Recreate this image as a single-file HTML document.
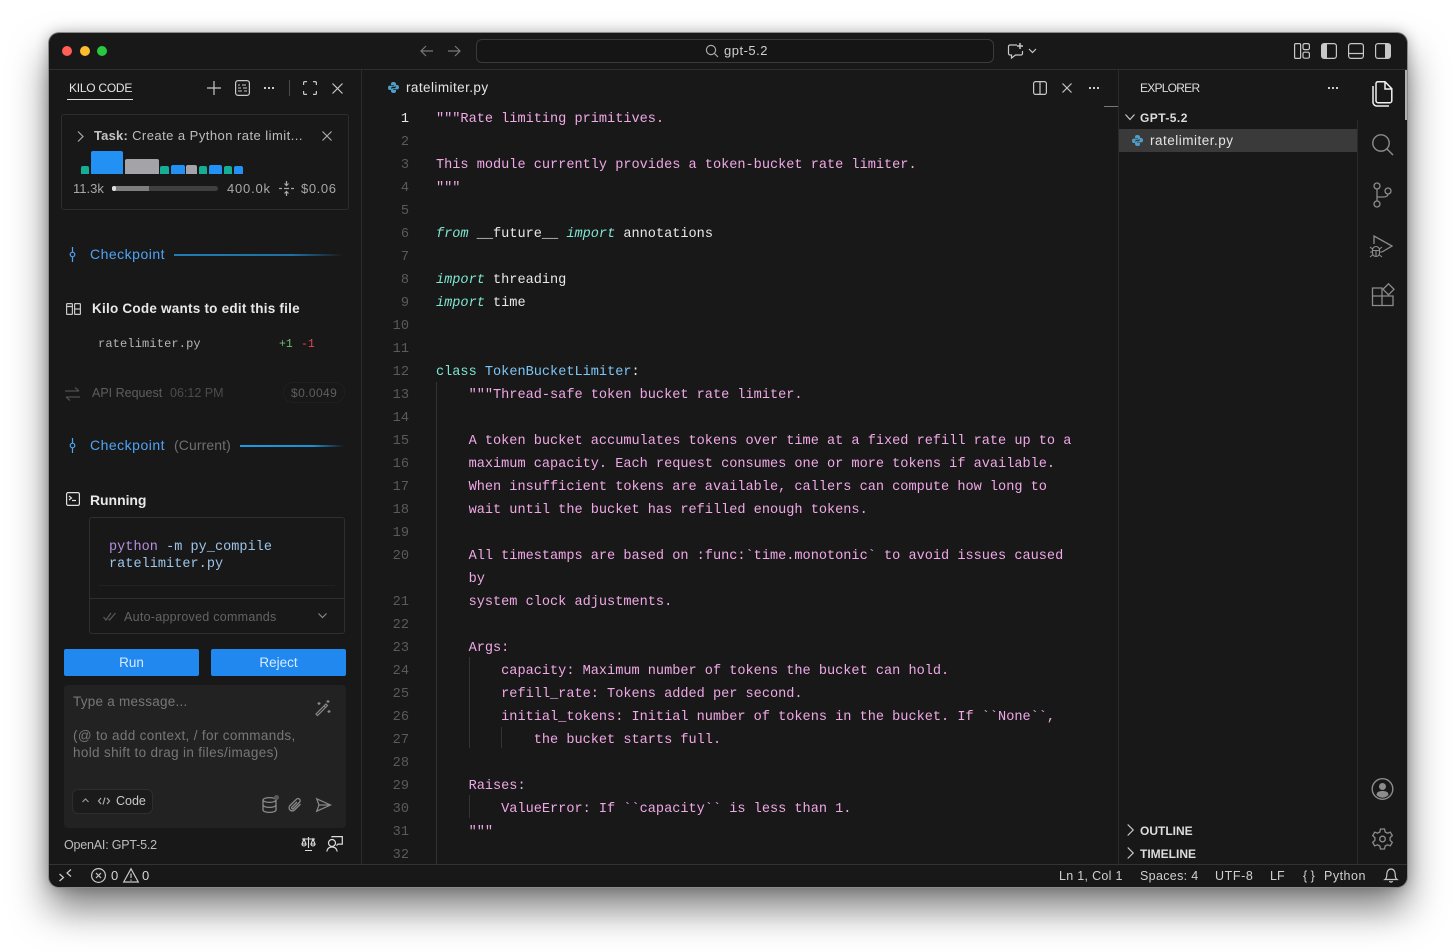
<!DOCTYPE html>
<html><head><meta charset="utf-8"><style>
*{box-sizing:border-box}
html,body{margin:0;padding:0;width:1456px;height:952px;background:#fff;overflow:hidden}
body{font-family:"Liberation Sans",sans-serif;position:relative}
#win{position:absolute;left:49px;top:33px;width:1358px;height:854px;background:#181818;border-radius:10px;box-shadow:0 0 0 1px #8a8a8a,0 22px 38px rgba(0,0,0,.5),0 0 14px rgba(0,0,0,.28);}
.a{position:absolute;white-space:pre}
.ln{position:absolute;left:1px;width:408px;margin-top:2px;text-align:right;font:13.6px/23px "Liberation Mono",monospace;color:#5a5a5a}
.c{position:absolute;left:436px;margin-top:2px;font:13.6px/23px "Liberation Mono",monospace;letter-spacing:-.012px;color:#f0a8e6;white-space:pre}
.k{color:#7fe6cf;font-style:italic}.w{color:#e8e8e8}.b{color:#7fc4f5}.d{color:#e8e8e8}
.s{font-size:13px;color:#cfcfcf;line-height:16px}
svg{position:absolute;overflow:visible;fill:none;stroke:#c8c8c8;stroke-width:1.2}
.r{position:absolute;background:#3a3a3a}
.bar{position:absolute;border-radius:2px 2px 0 0}
</style></head><body>
<div id="win"></div>

<!-- structural lines -->
<div class="r" style="left:49px;top:69px;width:1358px;height:1px;background:#2e2e2e"></div>
<div class="r" style="left:49px;top:864px;width:1358px;height:1px;background:#333"></div>
<div class="r" style="left:361px;top:70px;width:1px;height:794px;background:#2b2b2b"></div>
<div class="r" style="left:1118px;top:70px;width:1px;height:794px;background:#2b2b2b"></div>
<div class="r" style="left:1357px;top:120px;width:1px;height:744px;background:#2b2b2b"></div>
<div class="r" style="left:1405px;top:70px;width:2px;height:50px;background:#b0b0b0"></div>
<div class="r" style="left:1104px;top:106px;width:14px;height:1px;background:#777"></div>

<!-- traffic lights -->
<div class="a" style="left:62px;top:46px;width:10px;height:10px;border-radius:50%;background:#ff5f57"></div>
<div class="a" style="left:80px;top:46px;width:10px;height:10px;border-radius:50%;background:#febc2e"></div>
<div class="a" style="left:97px;top:46px;width:10px;height:10px;border-radius:50%;background:#28c840"></div>

<!-- title bar -->
<svg style="left:420px;top:44px" width="14" height="14" stroke="#777"><path d="M13 7H1M6 2L1 7l5 5" style="stroke:#777"/></svg>
<svg style="left:447px;top:44px" width="14" height="14"><path d="M1 7h12M8 2l5 5-5 5" style="stroke:#777"/></svg>
<div class="a" style="left:476px;top:39px;width:518px;height:24px;border:1px solid #3a3a3a;border-radius:6px;background:#151515"></div>
<svg style="left:705px;top:44px" width="14" height="14"><circle cx="6" cy="6" r="4.6" style="stroke:#aaa"/><path d="M9.5 9.5L13 13" style="stroke:#aaa"/></svg>
<div class="a s" style="left:724px;top:43px;letter-spacing:.5px">gpt-5.2</div>
<svg style="left:1007px;top:42px" width="34" height="18"><path d="M10 3H3a1.5 1.5 0 0 0-1.500 1.500v7A1.500 1.500 0 0 0 3 13h1.500v3l4-3H14a1.500 1.500 0 0 0 1.500-1.500V9"/><path d="M13 1v6M10 4h6" style="stroke-width:1.500"/><path d="M22 7l3.500 3.500L29 7"/></svg>
<svg style="left:1294px;top:43px" width="16" height="16"><rect x=".6" y=".6" width="6" height="14.800" rx="1.200"/><rect x="9" y=".6" width="6.400" height="6" rx="1.500"/><rect x="9" y="9.200" width="6.400" height="6" rx="1.500"/></svg>
<svg style="left:1321px;top:43px" width="16" height="16"><rect x=".6" y=".6" width="14.800" height="14.800" rx="2.500"/><path d="M1 3a2 2 0 0 1 2-2h3v14H3a2 2 0 0 1-2-2z" style="fill:#c8c8c8;stroke:none"/></svg>
<svg style="left:1348px;top:43px" width="16" height="16"><rect x=".6" y=".6" width="14.800" height="14.800" rx="2.500"/><path d="M1 10.500h14"/></svg>
<svg style="left:1375px;top:43px" width="16" height="16"><rect x=".6" y=".6" width="14.800" height="14.800" rx="2.500"/><path d="M10 1h3a2 2 0 0 1 2 2v10a2 2 0 0 1-2 2h-3z" style="fill:#c8c8c8;stroke:none"/></svg>

<!-- Kilo header -->
<div class="a" style="left:69px;top:81px;font-size:12px;line-height:15px;color:#e4e4e4;letter-spacing:-.25px">KILO CODE</div>
<div class="r" style="left:67px;top:99px;width:66px;height:1px;background:#ddd"></div>
<svg style="left:207px;top:81px" width="14" height="14"><path d="M7 0v14M0 7h14"/></svg>
<svg style="left:235px;top:80px" width="15" height="16"><rect x=".6" y=".6" width="13.800" height="14.800" rx="2.500"/><path d="M3 5h2M7 5h4M3 8h3M8 8h4M3 11h4M9 11h3" style="stroke-width:1"/></svg>
<div class="a" style="left:264px;top:87px;width:2px;height:2px;background:#ccc;box-shadow:4px 0 #ccc,8px 0 #ccc"></div>
<div class="r" style="left:289px;top:80px;width:1px;height:16px;background:#4a4a4a"></div>
<svg style="left:303px;top:81px" width="14" height="14"><path d="M.6 4V1.800A1.200 1.200 0 0 1 1.800.6H4M10 .6h2.200a1.200 1.200 0 0 1 1.200 1.200V4M13.400 10v2.200a1.200 1.200 0 0 1-1.200 1.200H10M4 13.400H1.800a1.200 1.200 0 0 1-1.200-1.200V10"/></svg>
<svg style="left:332px;top:83px" width="11" height="11"><path d="M.5.500l10 10M10.500.500l-10 10"/></svg>

<!-- Task card -->
<div class="a" style="left:61px;top:114px;width:288px;height:96px;border:1px solid #2d2d2d;border-radius:3px"></div>
<svg style="left:77px;top:131px" width="7" height="11"><path d="M1 .5l5 5-5 5" style="stroke:#aaa"/></svg>
<div class="a s" style="left:94px;top:128px;color:#bdbdbd;font-size:13px;letter-spacing:.46px"><b style="color:#c4c4c4;letter-spacing:.2px">Task:</b> Create a Python rate limit...</div>
<svg style="left:322px;top:131px" width="10" height="10"><path d="M.5.500l9 9M9.500.500l-9 9" style="stroke:#aaa"/></svg>
<div class="bar" style="left:81px;top:166px;width:8px;height:8px;background:#13ae93"></div>
<div class="bar" style="left:91px;top:151px;width:32px;height:23px;background:#2390f3"></div>
<div class="bar" style="left:125px;top:159px;width:34px;height:15px;background:#a3a3a8"></div>
<div class="bar" style="left:160px;top:166px;width:9px;height:8px;background:#13ae93"></div>
<div class="bar" style="left:171px;top:165px;width:14px;height:9px;background:#2390f3"></div>
<div class="bar" style="left:186px;top:165px;width:11px;height:9px;background:#a3a3a8"></div>
<div class="bar" style="left:199px;top:166px;width:8px;height:8px;background:#13ae93"></div>
<div class="bar" style="left:209px;top:165px;width:13px;height:9px;background:#2390f3"></div>
<div class="bar" style="left:224px;top:166px;width:8px;height:8px;background:#13ae93"></div>
<div class="bar" style="left:234px;top:166px;width:9px;height:8px;background:#2390f3"></div>
<div class="a s" style="left:73px;top:181px;color:#a8a8a8">11.3k</div>
<div class="a" style="left:112px;top:186px;width:106px;height:5px;background:#3f3f3f;border-radius:3px"></div>
<div class="a" style="left:112px;top:186px;width:37px;height:5px;background:#7e7e7e;border-radius:3px 0 0 3px"></div>
<div class="a" style="left:112px;top:186px;width:4px;height:5px;background:#ddd;border-radius:3px"></div>
<div class="a s" style="left:227px;top:181px;color:#a8a8a8;letter-spacing:.8px">400.0k</div>
<svg style="left:279px;top:181px" width="15" height="15"><path d="M7.500 0v4M5.500 2.500l2 2 2-2M7.500 15v-4M5.500 12.500l2-2 2 2M0 7.500h3M5 7.500h5M12 7.500h3" style="stroke:#aaa"/></svg>
<div class="a s" style="left:301px;top:181px;color:#a8a8a8;letter-spacing:.6px">$0.06</div>

<!-- Checkpoint 1 -->
<svg style="left:69px;top:247px" width="7" height="15"><circle cx="3.500" cy="7.500" r="2.300" style="stroke:#4ea4f5"/><path d="M3.500 0v5M3.500 10v5" style="stroke:#4ea4f5"/></svg>
<div class="a" style="left:90px;top:246px;font-size:14px;line-height:17px;color:#4ea4f5;letter-spacing:.5px">Checkpoint</div>
<div class="a" style="left:174px;top:254px;width:170px;height:2px;background:linear-gradient(90deg,#1f7db8,#1f6f9f 70%,rgba(24,24,24,0))"></div>

<!-- Edit -->
<svg style="left:66px;top:303px" width="15" height="12"><rect x=".6" y=".6" width="5.800" height="10.800" rx=".8"/><rect x="8.600" y=".6" width="5.800" height="10.800" rx=".8"/><path d="M1 3.500h5M9 6h5"/></svg>
<div class="a" style="left:92px;top:300px;font-size:13.500px;line-height:17px;font-weight:bold;color:#e8e8e8;letter-spacing:.23px">Kilo Code wants to edit this file</div>
<div class="a" style="left:98px;top:337px;font:12px/15px 'Liberation Mono',monospace;color:#b5b5b5;letter-spacing:.14px">ratelimiter.py</div>
<div class="a" style="left:279px;top:337px;font:11.500px/15px 'Liberation Mono',monospace;color:#6dbb6d">+1</div>
<div class="a" style="left:301px;top:337px;font:11.500px/15px 'Liberation Mono',monospace;color:#e2474f">-1</div>

<!-- API request -->
<svg style="left:65px;top:387px" width="15" height="14"><path d="M0 4h14M10 .5l4 3.500M15 10H1M5 13.500L1 10" style="stroke:#4e4e4e;stroke-width:1.300"/></svg>
<div class="a" style="left:92px;top:385px;font-size:12.500px;line-height:16px;color:#5e5e5e">API Request</div>
<div class="a" style="left:170px;top:385px;font-size:12.500px;line-height:16px;color:#4c4c4c">06:12 PM</div>
<div class="a" style="left:283px;top:382px;width:62px;height:21px;border:1px solid #1f1f1f;border-radius:10px"></div>
<div class="a" style="left:291px;top:385px;font-size:12px;line-height:16px;color:#5e5e5e;letter-spacing:.4px">$0.0049</div>

<!-- Checkpoint 2 -->
<svg style="left:69px;top:438px" width="7" height="15"><circle cx="3.500" cy="7.500" r="2.300" style="stroke:#4ea4f5"/><path d="M3.500 0v5M3.500 10v5" style="stroke:#4ea4f5"/></svg>
<div class="a" style="left:90px;top:437px;font-size:14px;line-height:17px;color:#4ea4f5;letter-spacing:.5px">Checkpoint</div>
<div class="a" style="left:174px;top:437px;font-size:14px;line-height:17px;color:#6f6f6f;letter-spacing:.1px">(Current)</div>
<div class="a" style="left:240px;top:445px;width:104px;height:2px;background:linear-gradient(90deg,#1d9ae6,#1d8fd4 70%,rgba(24,24,24,0))"></div>

<!-- Running -->
<svg style="left:66px;top:492px" width="14" height="14"><rect x=".6" y=".6" width="12.800" height="12.800" rx="1.500" style="stroke:#e0e0e0"/><path d="M3 4l2.500 2L3 8M6 8.500h4" style="stroke:#e0e0e0"/></svg>
<div class="a" style="left:90px;top:492px;font-size:14px;line-height:17px;font-weight:bold;color:#e8e8e8;letter-spacing:-.05px">Running</div>
<div class="a" style="left:89px;top:517px;width:256px;height:117px;border:1px solid #2f2f2f;border-radius:3px"></div>
<div class="a" style="left:99px;top:585px;width:236px;height:1px;background:#212121"></div>
<div class="a" style="left:90px;top:598px;width:254px;height:1px;background:#2f2f2f"></div>
<div class="a" style="left:109px;top:539px;font:13.500px/17px 'Liberation Mono',monospace;color:#9dc4ea;letter-spacing:.05px"><span style="color:#b58fe0">python</span> -m py_compile
ratelimiter.py</div>
<svg style="left:103px;top:612px" width="13" height="9"><path d="M.5 5l2.500 3 5-7M5.500 7l1 1 6-7" style="stroke:#5a5a5a"/></svg>
<div class="a" style="left:124px;top:609px;font-size:12.500px;line-height:16px;color:#636363;letter-spacing:.27px">Auto-approved commands</div>
<svg style="left:318px;top:613px" width="9" height="6"><path d="M.5.500l4 4 4-4" style="stroke:#888"/></svg>

<!-- Buttons -->
<div class="a" style="left:64px;top:649px;width:135px;height:27px;background:#2188f0;border-radius:2px;text-align:center;font-size:13.500px;line-height:28px;color:#d7ebff">Run</div>
<div class="a" style="left:211px;top:649px;width:135px;height:27px;background:#2188f0;border-radius:2px;text-align:center;font-size:13.500px;line-height:28px;color:#d7ebff">Reject</div>

<!-- Input -->
<div class="a" style="left:64px;top:685px;width:282px;height:143px;background:#222;border-radius:4px"></div>
<div class="a" style="left:73px;top:694px;font-size:13.500px;line-height:16px;color:#777;letter-spacing:.25px">Type a message...</div>
<div class="a" style="left:73px;top:727px;font-size:13.500px;line-height:17px;color:#777;letter-spacing:.34px">(@ to add context, / for commands,
hold shift to drag in files/images)</div>
<svg style="left:315px;top:700px" width="16" height="16"><path d="M1 14L11 4l1.500 1.500-10 10zM9 6l1.500 1.500M13 0v3M11.500 1.500h3M14 10v3M12.500 11.500h3M4 2v3M2.500 3.500h3" style="stroke:#8a8a8a"/></svg>
<div class="a" style="left:72px;top:789px;width:81px;height:25px;background:#1b1b1b;border:1px solid #2e2e2e;border-radius:6px"></div>
<svg style="left:82px;top:798px" width="7" height="5"><path d="M.5 4L3.500 1l3 3" style="stroke:#999"/></svg>
<svg style="left:98px;top:797px" width="12" height="8"><path d="M3 1L.5 4 3 7M9 1l2.500 3L9 7M7 .5L5 7.500" style="stroke:#aaa"/></svg>
<div class="a" style="left:116px;top:794px;font-size:12.500px;line-height:15px;color:#c8c8c8">Code</div>
<svg style="left:262px;top:797px" width="16" height="16"><ellipse cx="7.500" cy="3" rx="6.500" ry="2.400" style="stroke:#8a8a8a;stroke-width:1.300"/><path d="M1 3v10c0 1.300 3 2.400 6.500 2.400S14 14.300 14 13V3M1 8c0 1.300 3 2.400 6.500 2.400S14 9.300 14 8" style="stroke:#8a8a8a;stroke-width:1.300"/></svg>
<div class="a" style="left:274px;top:795px;width:5px;height:5px;border-radius:50%;background:#5a5a5a"></div>
<svg style="left:288px;top:798px" width="14" height="14"><path d="M12.500 6l-6 6a3 3 0 0 1-4.500-4.500L8.500 1.200a2 2 0 0 1 3 3L5.500 10.500a1 1 0 0 1-1.500-1.500l5-5" style="stroke:#8a8a8a;stroke-width:1.300"/></svg>
<svg style="left:316px;top:798px" width="15" height="14"><path d="M.7.800L14.500 7 .7 13.200 3 7zM3 7h11" style="stroke:#8a8a8a;stroke-width:1.200"/></svg>

<div class="a" style="left:64px;top:837px;font-size:12.500px;line-height:16px;color:#bdbdbd;letter-spacing:-.2px">OpenAI: GPT-5.2</div>
<svg style="left:301px;top:836px" width="15" height="16"><path d="M7.500 1v11M1 3h13M3 3L1 8h4zM12 3l-2 5h4zM1 8a2 2 0 0 0 4 0M10 8a2 2 0 0 0 4 0M4 14.500h7" style="stroke:#ddd;stroke-width:1.100"/></svg>
<svg style="left:326px;top:836px" width="17" height="16"><circle cx="6" cy="7" r="3.500" style="stroke:#ddd"/><path d="M.8 15.500c.5-3 2.500-4.500 5.200-4.500s4.700 1.500 5.200 4.500M6 1.500V.6h10.300v7.500h-4.300l-1.500 1.500" style="stroke:#ddd"/></svg>

<!-- Status bar -->
<svg style="left:59px;top:869px" width="13" height="13"><path d="M.5 5l4 3.500-4 3.500M12 .5L8 4l4 3.500" style="stroke:#ccc"/></svg>
<svg style="left:91px;top:868px" width="15" height="15"><circle cx="7.500" cy="7.500" r="6.900"/><path d="M5 5l5 5M10 5l-5 5"/></svg>
<div class="a s" style="left:111px;top:868px;color:#d6d6d6">0</div>
<svg style="left:123px;top:868px" width="16" height="15"><path d="M8 .8L15.300 14H.7zM8 5.500V10M8 11.500v1.200"/></svg>
<div class="a s" style="left:142px;top:868px;color:#d6d6d6">0</div>
<div class="a s" style="left:1059px;top:868px;font-size:12.500px;color:#cfcfcf;letter-spacing:.3px">Ln 1, Col 1</div>
<div class="a s" style="left:1140px;top:868px;font-size:12.500px;color:#cfcfcf;letter-spacing:.33px">Spaces: 4</div>
<div class="a s" style="left:1215px;top:868px;font-size:12.500px;color:#cfcfcf;letter-spacing:.6px">UTF-8</div>
<div class="a s" style="left:1270px;top:868px;font-size:12.500px;color:#cfcfcf">LF</div>
<div class="a s" style="left:1303px;top:868px;font-size:12.500px;color:#cfcfcf">{ }</div>
<div class="a s" style="left:1324px;top:868px;font-size:12.500px;color:#cfcfcf;letter-spacing:.5px">Python</div>
<svg style="left:1384px;top:868px" width="14" height="15"><path d="M1 11.500c1.500-1 1.800-2.500 1.800-5C2.800 3.200 4.500 1 7 1s4.200 2.200 4.200 5.500c0 2.500.3 4 1.800 5zM5.500 13a1.600 1.600 0 0 0 3 0"/></svg>

<!-- Editor tabs -->
<svg style="left:388px;top:82px" width="11" height="11"><path d="M5.500 0C3.500 0 3 .8 3 2v1h3v.6H1.600C.5 3.600 0 4.500 0 5.700S.6 8 1.600 8H3V6.500c0-1 .8-1.800 1.800-1.800h2c.8 0 1.300-.6 1.300-1.300V2C8 .8 7 0 5.500 0z" style="fill:#4d9fc9;stroke:none"/><path d="M5.500 11c2 0 2.500-.8 2.500-2V8H5v-.6h4.400c1.100 0 1.600-.9 1.600-2.100S10.400 3 9.400 3H8v1.500c0 1-.8 1.800-1.800 1.800h-2C3.400 6.300 3 6.900 3 7.600V9c0 1.200 1 2 2.500 2z" style="fill:#4d9fc9;stroke:none"/></svg>
<div class="a s" style="left:406px;top:80px;font-size:13.500px;color:#e4e4e4;letter-spacing:.43px">ratelimiter.py</div>
<svg style="left:1033px;top:81px" width="14" height="14"><rect x=".6" y=".6" width="12.800" height="12.800" rx="2"/><path d="M7 1v12"/></svg>
<svg style="left:1062px;top:83px" width="10" height="10"><path d="M.5.500l9 9M9.500.500l-9 9"/></svg>
<div class="a" style="left:1089px;top:87px;width:2px;height:2px;background:#ccc;box-shadow:4px 0 #ccc,8px 0 #ccc"></div>

<!-- Line numbers -->
<div class="ln" style="top:106px;color:#e8e8e8">1</div><div class="ln" style="top:129px">2</div><div class="ln" style="top:152px">3</div><div class="ln" style="top:175px">4</div><div class="ln" style="top:198px">5</div><div class="ln" style="top:221px">6</div><div class="ln" style="top:244px">7</div><div class="ln" style="top:267px">8</div><div class="ln" style="top:290px">9</div><div class="ln" style="top:313px">10</div><div class="ln" style="top:336px">11</div><div class="ln" style="top:359px">12</div><div class="ln" style="top:382px">13</div><div class="ln" style="top:405px">14</div><div class="ln" style="top:428px">15</div><div class="ln" style="top:451px">16</div><div class="ln" style="top:474px">17</div><div class="ln" style="top:497px">18</div><div class="ln" style="top:520px">19</div><div class="ln" style="top:543px">20</div><div class="ln" style="top:589px">21</div><div class="ln" style="top:612px">22</div><div class="ln" style="top:635px">23</div><div class="ln" style="top:658px">24</div><div class="ln" style="top:681px">25</div><div class="ln" style="top:704px">26</div><div class="ln" style="top:727px">27</div><div class="ln" style="top:750px">28</div><div class="ln" style="top:773px">29</div><div class="ln" style="top:796px">30</div><div class="ln" style="top:819px">31</div><div class="ln" style="top:842px">32</div>

<!-- Indent guides -->
<div class="r" style="left:436px;top:382px;width:1px;height:482px;background:#333"></div>
<div class="r" style="left:469px;top:657px;width:1px;height:91px;background:#333"></div>
<div class="r" style="left:469px;top:795px;width:1px;height:23px;background:#333"></div>
<div class="r" style="left:501px;top:727px;width:1px;height:21px;background:#333"></div>

<!-- Code -->
<div class="c" style="top:106px">"""Rate limiting primitives.</div>
<div class="c" style="top:152px">This module currently provides a token-bucket rate limiter.</div>
<div class="c" style="top:175px">"""</div>
<div class="c w" style="top:221px"><span class="k">from</span> __future__ <span class="k">import</span> annotations</div>
<div class="c w" style="top:267px"><span class="k">import</span> threading</div>
<div class="c w" style="top:290px"><span class="k">import</span> time</div>
<div class="c w" style="top:359px"><span style="color:#7fe6cf">class</span> <span class="b">TokenBucketLimiter</span>:</div>
<div class="c" style="top:382px">    """Thread-safe token bucket rate limiter.</div>
<div class="c" style="top:428px">    A token bucket accumulates tokens over time at a fixed refill rate up to a</div>
<div class="c" style="top:451px">    maximum capacity. Each request consumes one or more tokens if available.</div>
<div class="c" style="top:474px">    When insufficient tokens are available, callers can compute how long to</div>
<div class="c" style="top:497px">    wait until the bucket has refilled enough tokens.</div>
<div class="c" style="top:543px">    All timestamps are based on :func:`time.monotonic` to avoid issues caused</div>
<div class="c" style="top:566px">    by</div>
<div class="c" style="top:589px">    system clock adjustments.</div>
<div class="c" style="top:635px">    Args:</div>
<div class="c" style="top:658px">        capacity: Maximum number of tokens the bucket can hold.</div>
<div class="c" style="top:681px">        refill_rate: Tokens added per second.</div>
<div class="c" style="top:704px">        initial_tokens: Initial number of tokens in the bucket. If ``None``,</div>
<div class="c" style="top:727px">            the bucket starts full.</div>
<div class="c" style="top:773px">    Raises:</div>
<div class="c" style="top:796px">        ValueError: If ``capacity`` is less than 1.</div>
<div class="c" style="top:819px">    """</div>

<!-- Explorer -->
<div class="a" style="left:1140px;top:81px;font-size:12px;line-height:15px;color:#dcdcdc;letter-spacing:-.75px">EXPLORER</div>
<div class="a" style="left:1328px;top:87px;width:2px;height:2px;background:#ccc;box-shadow:4px 0 #ccc,8px 0 #ccc"></div>
<svg style="left:1125px;top:114px" width="10" height="7"><path d="M.5.500l4.500 5 4.500-5"/></svg>
<div class="a" style="left:1140px;top:111px;font-size:12px;line-height:15px;font-weight:bold;color:#dcdcdc;letter-spacing:.45px">GPT-5.2</div>
<div class="r" style="left:1119px;top:129px;width:238px;height:23px;background:#3a3a3a"></div>
<svg style="left:1132px;top:135px" width="11" height="11"><path d="M5.500 0C3.500 0 3 .8 3 2v1h3v.6H1.600C.5 3.600 0 4.500 0 5.700S.6 8 1.600 8H3V6.500c0-1 .8-1.800 1.800-1.800h2c.8 0 1.300-.6 1.300-1.300V2C8 .8 7 0 5.500 0z" style="fill:#4d9fc9;stroke:none"/><path d="M5.500 11c2 0 2.500-.8 2.500-2V8H5v-.6h4.400c1.100 0 1.600-.9 1.600-2.100S10.400 3 9.400 3H8v1.500c0 1-.8 1.800-1.800 1.800h-2C3.400 6.300 3 6.900 3 7.600V9c0 1.200 1 2 2.500 2z" style="fill:#4d9fc9;stroke:none"/></svg>
<div class="a s" style="left:1150px;top:133px;font-size:13.500px;color:#e4e4e4;letter-spacing:.5px">ratelimiter.py</div>
<svg style="left:1127px;top:824px" width="7" height="12"><path d="M.7.500l5.500 5.500-5.500 5.500"/></svg>
<div class="a" style="left:1140px;top:824px;font-size:12px;line-height:15px;font-weight:bold;color:#dcdcdc">OUTLINE</div>
<svg style="left:1127px;top:847px" width="7" height="12"><path d="M.7.500l5.500 5.500-5.500 5.500"/></svg>
<div class="a" style="left:1140px;top:847px;font-size:12px;line-height:15px;font-weight:bold;color:#dcdcdc">TIMELINE</div>

<!-- Activity bar -->
<svg style="left:1371px;top:81px" width="22" height="26"><path d="M5 2.500A1.800 1.800 0 0 1 6.800.7h7.200l6.800 7v12a2 2 0 0 1-2 2H7a2 2 0 0 1-2-2zM14 1v7h6.500" style="stroke:#f0f0f0;stroke-width:1.500"/><path d="M2 5v15.500A4 4 0 0 0 6 25h12" style="stroke:#f0f0f0;stroke-width:1.500"/></svg>
<svg style="left:1371px;top:134px" width="23" height="22"><circle cx="10" cy="9" r="8.200" style="stroke:#8c8c8c;stroke-width:1.400"/><path d="M16 15l6 6" style="stroke:#8c8c8c;stroke-width:1.400"/></svg>
<svg style="left:1373px;top:182px" width="19" height="26"><circle cx="4" cy="4" r="3" style="stroke:#8c8c8c;stroke-width:1.300"/><circle cx="4" cy="22" r="3" style="stroke:#8c8c8c;stroke-width:1.300"/><circle cx="15" cy="9" r="3" style="stroke:#8c8c8c;stroke-width:1.300"/><path d="M4 7v12M4 15h6c3 0 5-1 5-3" style="stroke:#8c8c8c;stroke-width:1.300"/></svg>
<svg style="left:1370px;top:235px" width="23" height="23"><path d="M4 9V1l18 10-10 6" style="stroke:#8c8c8c;stroke-width:1.300"/><path d="M2.500 15a3.500 3.500 0 0 1 7 0v3a3.500 3.500 0 0 1-7 0zM0 12l2.500 2M12 12l-2.500 2M0 17h2.500M9.500 17H12M0 22l2.500-2M12 22l-2.500-2M2.500 15.500h7M6 15.500v6" style="stroke:#8c8c8c;stroke-width:1.100"/></svg>
<svg style="left:1371px;top:283px" width="24" height="24"><path d="M11 5H1.500v17.500H22V13H11zM1.500 13H11v9.500" style="stroke:#8c8c8c;stroke-width:1.300"/><path d="M17.500.8l5.500 5.500-5.500 5.500-5.500-5.500z" style="stroke:#8c8c8c;stroke-width:1.300"/></svg>
<svg style="left:1371px;top:778px" width="23" height="22"><circle cx="11.500" cy="11" r="10.300" style="stroke:#8c8c8c;stroke-width:1.400"/><circle cx="11.500" cy="8.500" r="3.500" style="fill:#8c8c8c;stroke:none"/><path d="M5.500 17c0-3 2.500-4 6-4s6 1 6 4a8 8 0 0 1-12 0z" style="fill:#8c8c8c;stroke:none"/></svg>
<svg style="left:1371px;top:828px" width="23" height="22"><path d="M9.500 1h4l.7 3 2.300 1.200 2.800-1 2 3.400-2.200 2.100v2.600l2.200 2.100-2 3.400-2.800-1-2.300 1.200-.7 3h-4l-.7-3-2.300-1.200-2.800 1-2-3.400 2.200-2.100V9.700L1.700 7.600l2-3.400 2.800 1 2.300-1.200z" style="stroke:#8c8c8c;stroke-width:1.300"/><circle cx="11.500" cy="11" r="2.800" style="stroke:#8c8c8c;stroke-width:1.300"/></svg>
</body></html>
